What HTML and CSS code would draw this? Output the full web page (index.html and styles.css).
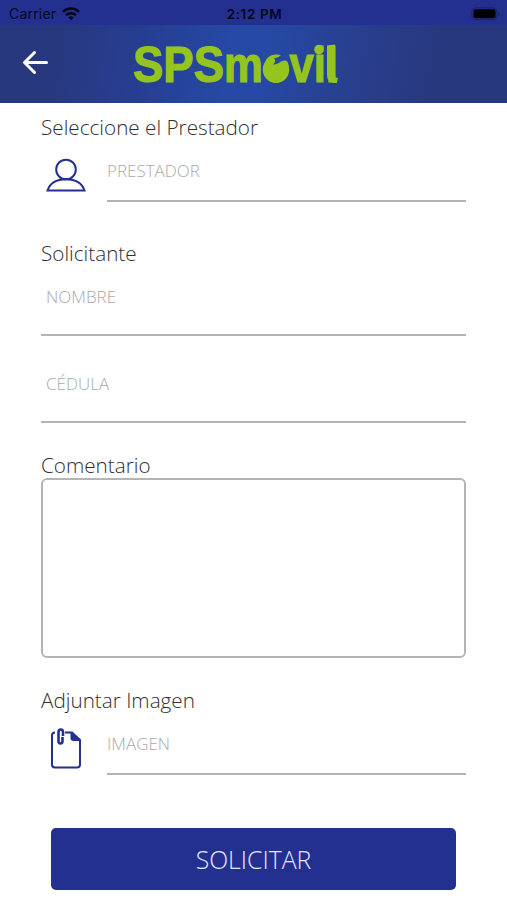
FILE: index.html
```html
<!DOCTYPE html>
<html lang="es">
<head>
  <meta charset="UTF-8" />
  <meta name="viewport" content="width=device-width, initial-scale=1.0"/>
  <title>SPSmovil</title>
  <link rel="stylesheet" href="styles.css">
</head>
<body>
  <div class="status-bar">
    <div class="carrier">
      <span>Carrier</span>
      <svg width="18" height="14" viewBox="0 0 18 14" fill="none" stroke="#05071c" stroke-width="2.5">
        <path d="M1 4.8a11.5 11.5 0 0 1 16 0" />
        <path d="M4 8.2a7.2 7.2 0 0 1 10 0" />
        <path d="M9 13.3L6.2 10.6a4 4 0 0 1 5.6 0z" fill="#05071c" stroke="none" />
      </svg>
    </div>
    <span class="time">2:12 PM</span>
    <div class="battery">
      <svg width="29" height="14" viewBox="0 0 29 14">
        <rect x="0.8" y="0.8" width="25" height="12" rx="3.5" fill="none" stroke="#1b2366" />
        <rect x="2.5" y="2.3" width="22" height="9" rx="2" fill="#000" />
        <path d="M27 5v4q1.6-.6 1.6-2T27 5z" fill="#1b2366" />
      </svg>
    </div>
  </div>

  <header class="header">
    <button class="back" type="button" aria-label="Volver">
      <svg width="26" height="24" viewBox="0 0 26 24" fill="none" stroke="#fff" stroke-width="3" stroke-linecap="round" stroke-linejoin="round">
        <path d="M12.5 2.5L2.5 12.5l10 10M3 12.5H24.5" />
      </svg>
    </button>
    <svg class="logo" width="216" height="78" viewBox="0 0 216 78">
      <text x="-1" y="57" textLength="91" lengthAdjust="spacingAndGlyphs">SPS</text>
      <text x="90" y="57" textLength="114" lengthAdjust="spacingAndGlyphs">movil</text>
      <!-- solid "o" with the leaf cut, round dot and curved tail -->
      <circle cx="142" cy="44.7" r="13.2" />
      <path class="logo-notch" d="M139 39.5q4-3.500 1-6 4.500-.5 7-3.500h7v6.500q-4-2.500-8.500 1-3 2.500-6.500 2z" />
      <circle cx="185" cy="24.500" r="4.800" />
      <path d="M193 20.500l8-1v31q0 2.500 3 2.500l-1.200 5q-9.800.5-9.800-8z" />
    </svg>
  </header>

  <form class="form">
    <label for="prestador">Seleccione el Prestador</label>
    <div class="icon-row">
      <svg width="42" height="36" viewBox="0 0 42 36" fill="none" stroke="#23308f" stroke-width="2">
        <circle cx="21" cy="11.5" r="9.8" />
        <path d="M2.5 32.5C5 25 12 21.3 21 21.3S37 25 39.5 32.5z" />
      </svg>
      <input type="text" id="prestador" placeholder="PRESTADOR">
    </div>

    <label for="nombre" class="label-solicitante">Solicitante</label>
    <input type="text" id="nombre" class="nombre" placeholder="NOMBRE">
    <input type="text" id="cedula" class="cedula" placeholder="CÉDULA">

    <label for="comentario" class="label-comentario">Comentario</label>
    <textarea id="comentario"></textarea>

    <label for="imagen" class="label-imagen">Adjuntar Imagen</label>
    <div class="icon-row">
      <svg width="42" height="42" viewBox="0 0 42 42" fill="none" stroke="#23308f" stroke-width="2">
        <path d="M10 4.5Q7 4.5 7 7.5v29q0 3 3 3h22q3 0 3-3V12L27 4.5H20" />
        <path d="M25.5 3.5V10q0 3 3 3h7z" fill="#23308f" stroke="none" />
        <path d="M18 8V4q0-2.5-2.2-2.5T13.5 4v9q0 2.5 2 2.5t2-2.5V9" stroke-width="2.6" />
      </svg>
      <input type="text" id="imagen" placeholder="IMAGEN">
    </div>

    <button type="button" class="submit">SOLICITAR</button>
  </form>
</body>
</html>
```
FILE: styles.css
```css
* {
  margin: 0;
  padding: 0;
  box-sizing: border-box;
  font-family: 'Open Sans', sans-serif;
}

body {
  background-color: #fff;
  color: #303030;
}

.status-bar {
  display: grid;
  grid-template-columns: 1fr auto 1fr;
  align-items: center;
  height: 25px;
  padding: 2px 7px 0 9px;
  background-color: #23308f;
  color: #05071c;
}

.status-bar span {
  font-family: 'Inter', sans-serif;
  font-size: 14px;
  letter-spacing: 0.2px;
}

.carrier {
  display: flex;
  align-items: center;
  gap: 6px;
}

.status-bar .time {
  font-size: 13.5px;
  font-weight: 600;
  letter-spacing: 0.6px;
}

.battery {
  display: flex;
  justify-content: flex-end;
}

.header {
  display: flex;
  align-items: center;
  height: 78px;
  padding-left: 22px;
  background: linear-gradient(100deg, #28387f 12%, #263f94 30%, #2549a5 45%, #2549a5 52%, #28408f 68%, #28387f 85%);
}

.back {
  display: flex;
  margin-bottom: 4px;
  border: none;
  background: none;
  cursor: pointer;
}

.logo {
  margin-left: 86px;
  overflow: visible;
  fill: #95c41f;
}

.logo text {
  font-family: 'Liberation Sans', sans-serif;
  font-size: 50px;
  font-weight: bold;
  stroke: #95c41f;
  stroke-width: 1.2px;
}

.logo-notch {
  fill: #2549a3;
}

.form {
  display: flex;
  flex-direction: column;
  padding: 10px 41px 0;
}

label {
  height: 28px;
  font-size: 20.7px;
  font-weight: 300;
  line-height: 28px;
}

input {
  width: 100%;
  border: none;
  border-bottom: 2px solid #b4b4b4;
  background: none;
  font-size: 17px;
  font-weight: 300;
  outline: none;
}

input::placeholder {
  color: #aaa;
}

.icon-row {
  display: flex;
  align-items: center;
  gap: 20px;
  height: 61px;
  padding-left: 4px;
}

.icon-row svg {
  flex-shrink: 0;
  margin-top: 8px;
}

.icon-row input {
  height: 61px;
}

.label-solicitante {
  margin-top: 37px;
}

.nombre,
.cedula {
  padding: 0 5px 8px;
}

.nombre {
  height: 69px;
}

.cedula {
  height: 87px;
  padding-top: 17px;
}

.label-comentario {
  height: 27px;
  margin-top: 28px;
}

textarea {
  height: 180px;
  padding: 8px;
  border: 2px solid #b4b4b4;
  border-radius: 6px;
  font-size: 17px;
  resize: none;
  outline: none;
}

.label-imagen {
  margin-top: 28px;
}

.submit {
  height: 62px;
  margin: 53px 10px 0;
  border: none;
  border-radius: 5px;
  background-color: #23308f;
  color: #e4e8ff;
  font-size: 24.8px;
  font-weight: 300;
  cursor: pointer;
}
```
